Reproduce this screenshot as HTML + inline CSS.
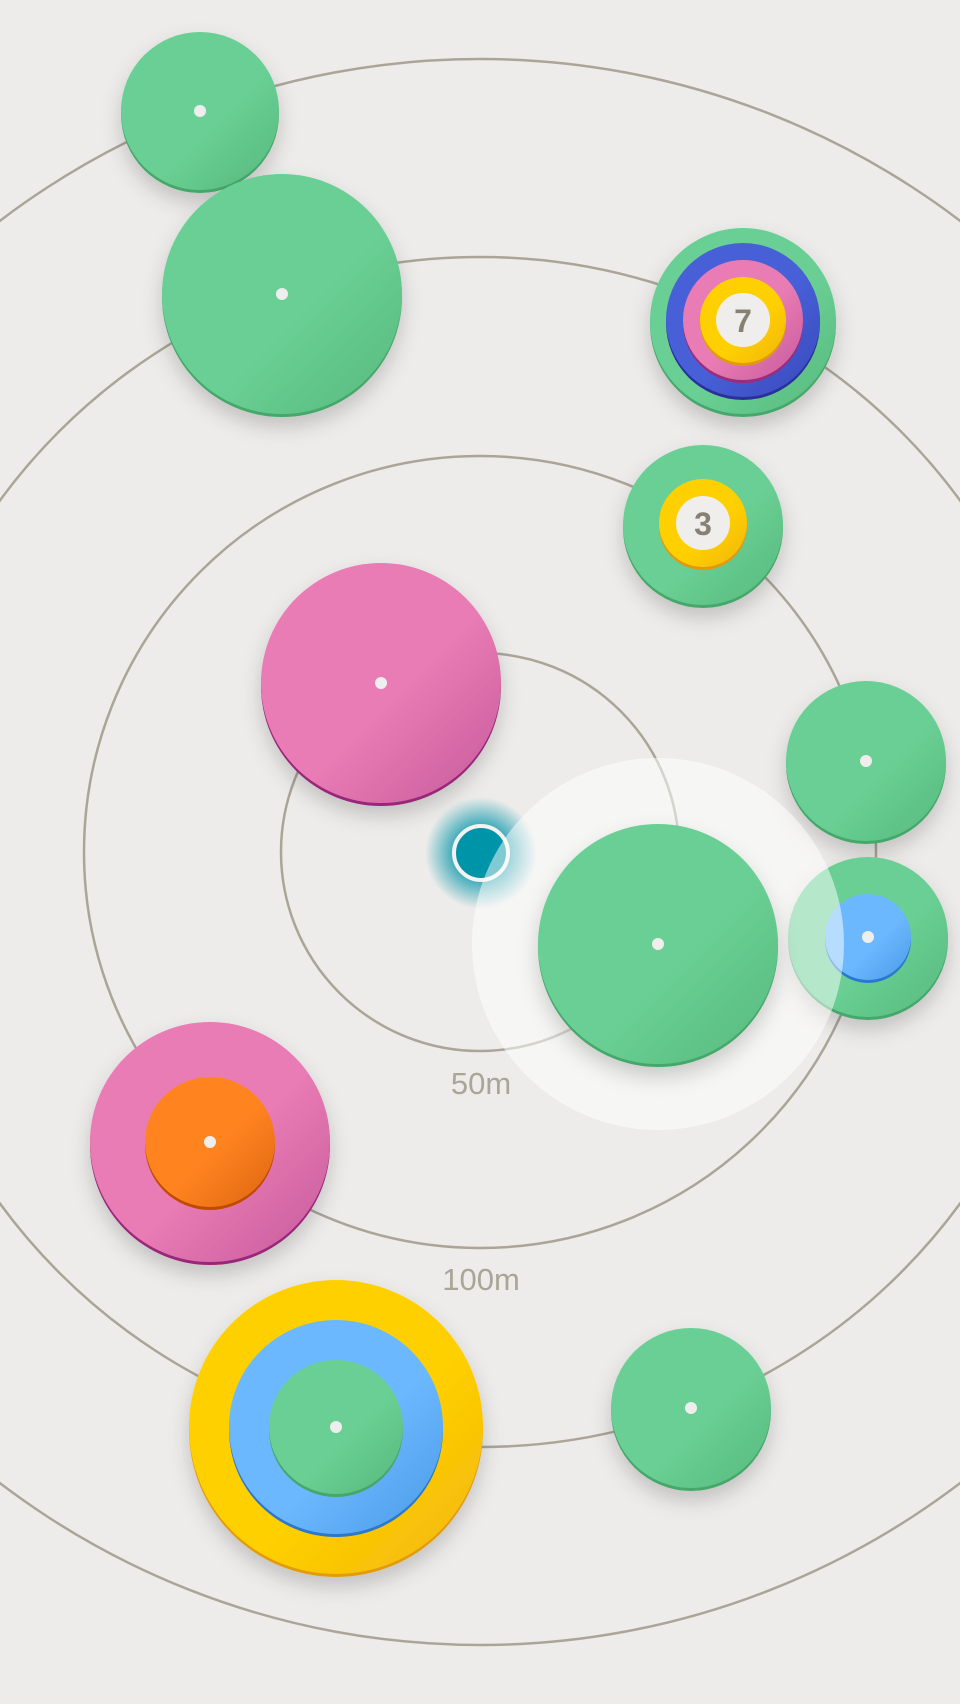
<!DOCTYPE html>
<html><head><meta charset="utf-8"><style>
html,body{margin:0;padding:0;background:#edecea;}
svg{display:block}
text{font-family:"Liberation Sans",sans-serif}
</style></head><body>
<svg width="960" height="1704" viewBox="0 0 960 1704" xmlns="http://www.w3.org/2000/svg">
<defs>
<linearGradient id="g" x1="0.3" y1="0.3" x2="1" y2="1"><stop offset="0.4" stop-color="#6acf94"/><stop offset="1" stop-color="#56b97d"/></linearGradient>
<linearGradient id="p" x1="0.3" y1="0.3" x2="1" y2="1"><stop offset="0.35" stop-color="#e97cb4"/><stop offset="1" stop-color="#c65a9c"/></linearGradient>
<linearGradient id="b" x1="0.3" y1="0.3" x2="1" y2="1"><stop offset="0.35" stop-color="#4760d8"/><stop offset="1" stop-color="#3a48bb"/></linearGradient>
<linearGradient id="y" x1="0.3" y1="0.3" x2="1" y2="1"><stop offset="0.4" stop-color="#ffd000"/><stop offset="1" stop-color="#f1b50e"/></linearGradient>
<linearGradient id="lb" x1="0.3" y1="0.3" x2="1" y2="1"><stop offset="0.4" stop-color="#6cb8ff"/><stop offset="1" stop-color="#4a9ae6"/></linearGradient>
<linearGradient id="o" x1="0.3" y1="0.3" x2="1" y2="1"><stop offset="0.35" stop-color="#ff8420"/><stop offset="1" stop-color="#de6512"/></linearGradient>
<radialGradient id="glow"><stop offset="0.45" stop-color="#0094a8" stop-opacity="0.8"/><stop offset="1" stop-color="#0094a8" stop-opacity="0"/></radialGradient>
<filter id="sh" x="-30%" y="-30%" width="160%" height="170%"><feDropShadow dx="0" dy="10" stdDeviation="10" flood-color="#000" flood-opacity="0.18"/></filter>
</defs>
<g fill="none" stroke="#a9a698" stroke-width="2.5">
<circle cx="480" cy="852" r="199"/>
<circle cx="480" cy="852" r="396"/>
<circle cx="480" cy="852" r="595"/>
<circle cx="480" cy="852" r="793"/>
</g>
<text x="481" y="1094" font-size="31" fill="#a9a698" text-anchor="middle">50m</text>
<text x="481" y="1290" font-size="31" fill="#a9a698" text-anchor="middle">100m</text>

<g filter="url(#sh)"><circle cx="200" cy="114" r="79" fill="#45a86a"/><circle cx="200" cy="111" r="79" fill="url(#g)"/></g>
<circle cx="200" cy="111" r="6" fill="#eeeeee"/>
<g filter="url(#sh)"><circle cx="282" cy="297" r="120" fill="#45a86a"/><circle cx="282" cy="294" r="120" fill="url(#g)"/></g>
<circle cx="282" cy="294" r="6" fill="#eeeeee"/>
<g filter="url(#sh)"><circle cx="743" cy="324" r="93" fill="#45a86a"/><circle cx="743" cy="321" r="93" fill="url(#g)"/></g>
<circle cx="743" cy="323" r="77" fill="#2a2f9a"/><circle cx="743" cy="320" r="77" fill="url(#b)"/>
<circle cx="743" cy="323" r="60" fill="#9a2c7c"/><circle cx="743" cy="320" r="60" fill="url(#p)"/>
<circle cx="743" cy="323" r="43" fill="#e09a10"/><circle cx="743" cy="320" r="43" fill="url(#y)"/>
<circle cx="743" cy="320" r="27" fill="#efeeec"/>
<text x="743" y="332" font-size="32" font-weight="bold" fill="#858274" text-anchor="middle">7</text>
<g filter="url(#sh)"><circle cx="703" cy="528" r="80" fill="#45a86a"/><circle cx="703" cy="525" r="80" fill="url(#g)"/></g>
<circle cx="703" cy="526" r="44" fill="#e09a10"/><circle cx="703" cy="523" r="44" fill="url(#y)"/>
<circle cx="703" cy="523" r="27" fill="#efeeec"/>
<text x="703" y="535" font-size="32" font-weight="bold" fill="#858274" text-anchor="middle">3</text>
<g filter="url(#sh)"><circle cx="381" cy="686" r="120" fill="#98287a"/><circle cx="381" cy="683" r="120" fill="url(#p)"/></g>
<circle cx="381" cy="683" r="6" fill="#eeeeee"/>
<g filter="url(#sh)"><circle cx="866" cy="764" r="80" fill="#45a86a"/><circle cx="866" cy="761" r="80" fill="url(#g)"/></g>
<circle cx="866" cy="761" r="6" fill="#eeeeee"/>
<g filter="url(#sh)"><circle cx="868" cy="940" r="80" fill="#45a86a"/><circle cx="868" cy="937" r="80" fill="url(#g)"/></g>
<circle cx="868" cy="940" r="43" fill="#2a78d0"/><circle cx="868" cy="937" r="43" fill="url(#lb)"/>
<circle cx="868" cy="937" r="6" fill="#eeeeee"/>
<g filter="url(#sh)"><circle cx="210" cy="1145" r="120" fill="#98287a"/><circle cx="210" cy="1142" r="120" fill="url(#p)"/></g>
<circle cx="210" cy="1145" r="65" fill="#c04a00"/><circle cx="210" cy="1142" r="65" fill="url(#o)"/>
<circle cx="210" cy="1142" r="6" fill="#eeeeee"/>
<g filter="url(#sh)"><circle cx="336" cy="1430" r="147" fill="#e39a0c"/><circle cx="336" cy="1427" r="147" fill="url(#y)"/></g>
<circle cx="336" cy="1430" r="107" fill="#2a78d0"/><circle cx="336" cy="1427" r="107" fill="url(#lb)"/>
<circle cx="336" cy="1430" r="67" fill="#45a86a"/><circle cx="336" cy="1427" r="67" fill="url(#g)"/>
<circle cx="336" cy="1427" r="6" fill="#eeeeee"/>
<g filter="url(#sh)"><circle cx="691" cy="1411" r="80" fill="#45a86a"/><circle cx="691" cy="1408" r="80" fill="url(#g)"/></g>
<circle cx="691" cy="1408" r="6" fill="#eeeeee"/>
<circle cx="481" cy="853" r="56" fill="url(#glow)"/>
<circle cx="481" cy="853" r="27" fill="#0094a8" stroke="#f2f2f0" stroke-width="4"/>
<circle cx="658" cy="944" r="186" fill="#ffffff" fill-opacity="0.5"/>
<g filter="url(#sh)"><circle cx="658" cy="947" r="120" fill="#45a86a"/><circle cx="658" cy="944" r="120" fill="url(#g)"/></g>
<circle cx="658" cy="944" r="6" fill="#eeeeee"/>
</svg>
</body></html>
